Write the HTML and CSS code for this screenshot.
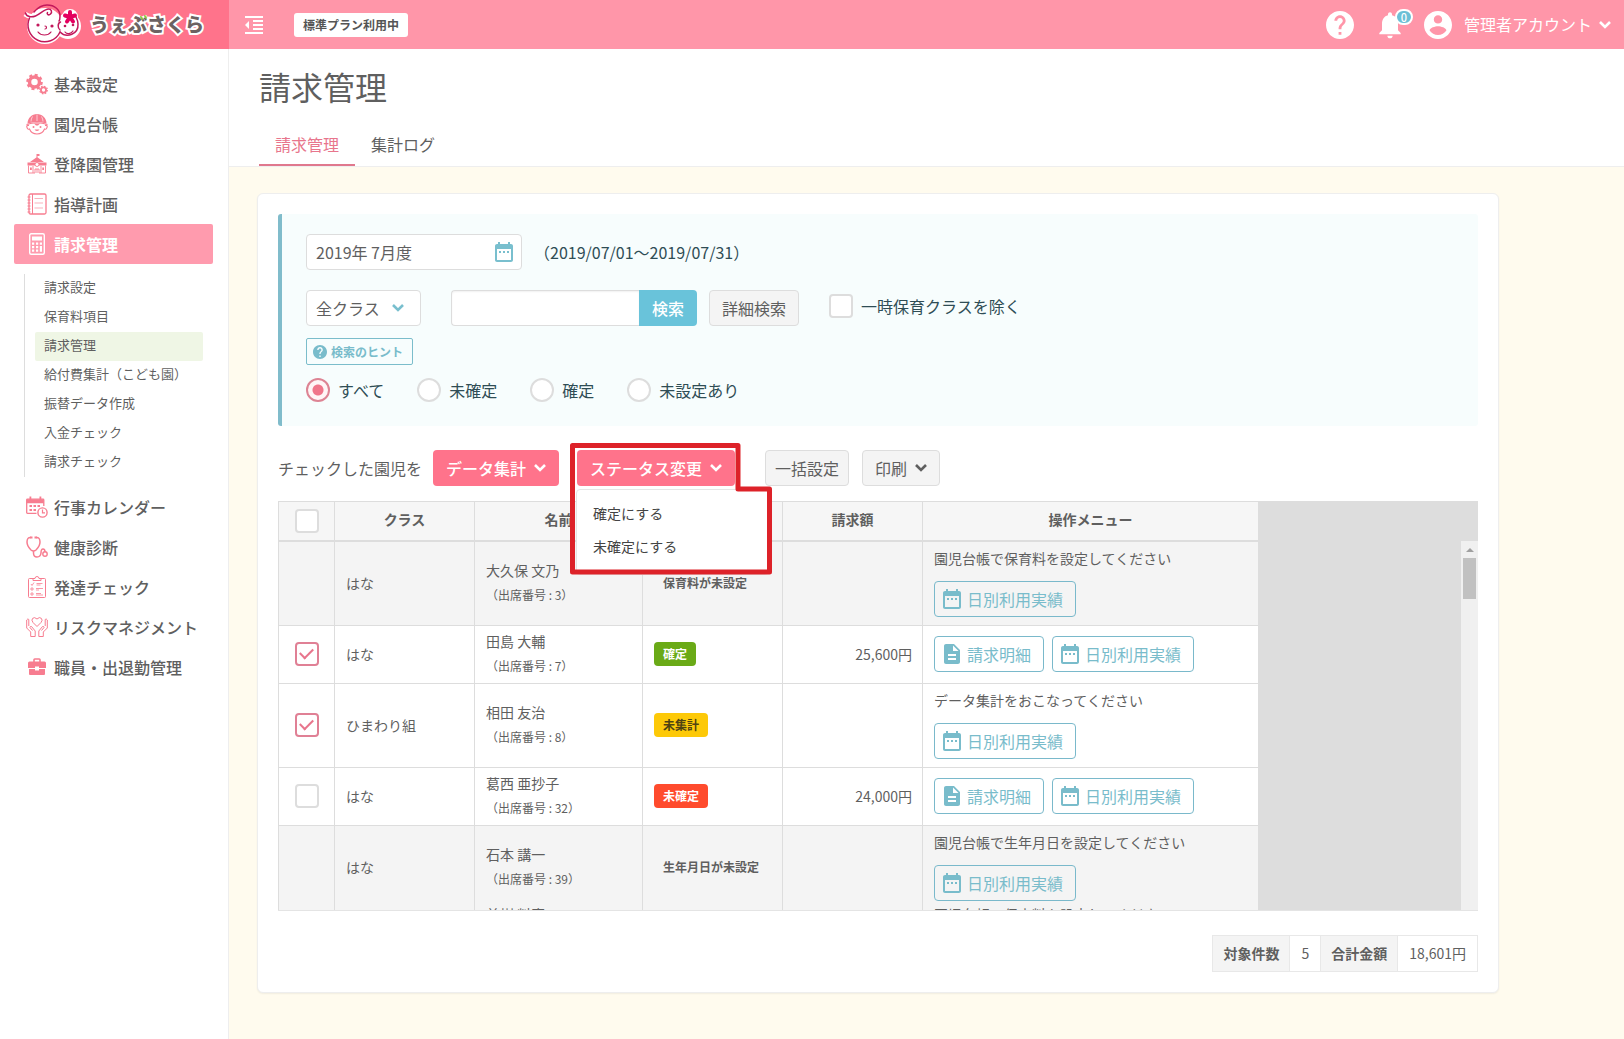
FILE: index.html
```html
<!DOCTYPE html>
<html lang="ja">
<head>
<meta charset="utf-8">
<meta name="viewport" content="width=device-width, initial-scale=1">
<title>請求管理 | うぇぶさくら</title>
<link rel="stylesheet" href="styles.css">
</head>
<body>
<svg class="sprite" aria-hidden="true">
  <symbol id="i-date" viewBox="0 0 24 24"><path d="M9 11H7v2h2v-2zm4 0h-2v2h2v-2zm4 0h-2v2h2v-2zm2-7h-1V2h-2v2H8V2H6v2H5c-1.11 0-1.99.9-1.99 2L3 20c0 1.1.89 2 2 2h14c1.1 0 2-.9 2-2V6c0-1.1-.9-2-2-2zm0 16H5V9h14v11z"/></symbol>
  <symbol id="i-doc" viewBox="0 0 24 24"><path d="M14 2H6c-1.1 0-1.99.9-1.99 2L4 20c0 1.1.89 2 1.99 2H18c1.1 0 2-.9 2-2V8l-6-6zm2 16H8v-2h8v2zm0-4H8v-2h8v2zm-3-5V3.5L18.5 9H13z"/></symbol>
  <symbol id="i-help" viewBox="2 2 20 20"><path d="M12 2C6.48 2 2 6.48 2 12s4.48 10 10 10 10-4.48 10-10S17.52 2 12 2zm1 17h-2v-2h2v2zm2.07-7.75l-.9.92C13.45 12.9 13 13.5 13 15h-2v-.5c0-1.1.45-2.1 1.17-2.83l1.24-1.26c.37-.36.59-.86.59-1.41 0-1.1-.9-2-2-2s-2 .9-2 2H8c0-2.21 1.79-4 4-4s4 1.79 4 4c0 .88-.36 1.68-.93 2.25z"/></symbol>
  <symbol id="i-chev" viewBox="0 0 12 12"><path d="M1 3l5 5 5-5" fill="none" stroke="currentColor" stroke-width="2.600"/></symbol>
</svg>

<header class="topbar">
  <a class="brand" href="#" aria-label="うぇぶさくら">
    <svg class="brand-mark" viewBox="0 0 60 44" aria-hidden="true">
      <g fill="#fff" stroke="#fff" stroke-width="3">
        <circle cx="23" cy="24" r="16.500"/><circle cx="46" cy="24" r="11.500"/><circle cx="48" cy="15" r="6.500"/><path d="M3 12q8 6 15-2" fill="none" stroke-width="5"/>
      </g>
      <g fill="none" stroke="#c2185b" stroke-width="1.500" stroke-linecap="round">
        <path d="M7.500 16A15.800 15.800 0 1 0 38 30"/>
        <path d="M3.500 11c1 4 6 4.500 10 3 5-2 9-7 13-7 3 0 4 3 2 5s-4 0-3-1.500M12 10Q18 3 25 3c8 0 13 5 13 11 0 4-1 5-1 5"/>
        <path d="M38 30a10.500 10.500 0 0 0 18-8c0-3-1-5-2-7M38.500 20c-3 1-3 6-.5 8"/>
        <path d="M16 30c3 4 10 4 13 0M43 30c2 2.500 6 2 8-1M23 24c2 0 2 3 0 3" stroke-width="1.200"/>
      </g>
      <g fill="#c2185b"><circle cx="16" cy="23" r="1.600"/><circle cx="30" cy="24" r="1.600"/><circle cx="43" cy="24" r="1.300"/><circle cx="51" cy="23" r="1.300"/></g>
      <path d="M48 15V10M48 15l5-1.500M48 15l3 4.500M48 15l-3 4.500M48 15l-5-1.500" stroke="#e4005f" stroke-width="4" stroke-linecap="round"/>
    </svg>
    <span class="brand-name">うぇぶさくら</span>
    <svg class="brand-leaf" viewBox="0 0 8 6" aria-hidden="true"><path d="M0 1q3 0 3 4-3-1-3-4zM4 0q3 0 3 4-3-1-3-4z" fill="#8cc63f"/></svg>
  </a>
  <div class="topbar-main">
    <button class="icon-btn" type="button" aria-label="メニューを閉じる"><svg class="ic18" viewBox="3 3 18 18"><path fill="currentColor" d="M11 17h10v-2H11v2zm-8-5l4 4V8l-4 4zm0 9h18v-2H3v2zM3 3v2h18V3H3zm8 6h10V7H11v2zm0 4h10v-2H11v2z"/></svg></button>
    <span class="plan">標準プラン利用中</span>
    <div class="user-area">
      <a class="icon-link" href="#" aria-label="ヘルプ"><svg class="ic28"><use href="#i-help"/></svg></a>
      <a class="icon-link bell" href="#" aria-label="お知らせ"><svg class="ic32" viewBox="0 0 24 24"><path d="M12 22c1.100 0 2-.9 2-2h-4c0 1.100.89 2 2 2zm6-6v-5c0-3.070-1.640-5.640-4.500-6.320V4c0-.83-.67-1.500-1.500-1.500s-1.500.67-1.500 1.500v.68C7.630 5.360 6 7.920 6 11v5l-2 2v1h16v-1l-2-2z"/></svg><span class="count">0</span></a>
      <a class="account" href="#"><svg class="ic28" viewBox="2 2 20 20" aria-hidden="true"><path d="M12 2C6.480 2 2 6.480 2 12s4.480 10 10 10 10-4.480 10-10S17.520 2 12 2zm0 3c1.660 0 3 1.340 3 3s-1.340 3-3 3-3-1.340-3-3 1.340-3 3-3zm0 14.200c-2.500 0-4.710-1.280-6-3.220.03-1.990 4-3.080 6-3.080 1.990 0 5.970 1.090 6 3.080-1.290 1.940-3.500 3.220-6 3.220z"/></svg><span class="account-name">管理者アカウント</span><svg class="ic12"><use href="#i-chev"/></svg></a>
    </div>
  </div>
</header>

<div class="shell">
  <nav class="sidebar" aria-label="メインメニュー">
    <a class="nav-item" href="#"><svg viewBox="0 0 22 22" aria-hidden="true"><circle cx="8.500" cy="9" r="5" fill="none" stroke="currentColor" stroke-width="3.500"/><circle cx="8.500" cy="9" r="7.200" fill="none" stroke="currentColor" stroke-width="2.200" stroke-dasharray="3 2.650"/><circle cx="17.500" cy="17" r="2.600" fill="none" stroke="currentColor" stroke-width="1.800"/><circle cx="17.500" cy="17" r="3.800" fill="none" stroke="currentColor" stroke-width="1.200" stroke-dasharray="1.600 1.380"/></svg>基本設定</a>
    <a class="nav-item" href="#"><svg viewBox="0 0 22 22" aria-hidden="true"><path d="M1.500 10.500C1.500 5 6 1 11 1s9.500 4 9.500 9.500q-9.500-3-19 0z" fill="currentColor"/><path d="M11 1.500v6.500M6.500 3.500Q5 6 5 8.500M15.500 3.500Q17 6 17 8.500" stroke="#fff" stroke-width=".6" fill="none"/><path d="M.5 11.500Q11 8 21.500 11.500M3 12.500Q0 12 1 14.500t2.500 1.500q2 5 7.500 5t7.500-5q1.500 1 2.500-1.500t-2-2" fill="none" stroke="currentColor" stroke-width="1.100"/><circle cx="7.500" cy="14" r="1" fill="currentColor"/><circle cx="14.500" cy="14" r="1" fill="currentColor"/><path d="M8 10.500h6l-2 2h-2zM8.500 16.500h5q-2.500 3-5 0z" fill="currentColor"/></svg>園児台帳</a>
    <a class="nav-item" href="#"><svg viewBox="0 0 22 22" aria-hidden="true"><path d="M4 9l7-5 7 5zM10.500 1h3v2h-2v2h-1zM1.500 9.500h19v3h-19z" fill="currentColor"/><path d="M2.500 12.500v7.500h4.500v-7M15 13v7h4.500v-7.500M7 20h2v-4h4v4h2M11 16v4" fill="none" stroke="currentColor" stroke-width=".9"/><path d="M4 14.500h1.800V17H4zM16.300 14.500H18V17h-1.700z" fill="currentColor"/><circle cx="11" cy="11.500" r="2" fill="#fff" stroke="currentColor" stroke-width=".9"/></svg>登降園管理</a>
    <a class="nav-item" href="#"><svg viewBox="0 0 22 22" aria-hidden="true"><rect x="3" y="1" width="17" height="20" rx="1.500" fill="none" stroke="currentColor" stroke-width="1.300"/><path d="M6.500 1v20M1.500 4h3M1.500 7h3M1.500 10h3M1.500 13h3M1.500 16h3M1.500 19h3" stroke="currentColor"/><path d="M8.500 5.500h8.500M8.500 10h8.500M8.500 15h8.500" stroke="currentColor" stroke-width=".6"/></svg>指導計画</a>
    <a class="nav-item is-active" href="#" aria-current="page"><svg viewBox="0 0 22 22" aria-hidden="true"><rect x="3.700" y=".7" width="14.600" height="20.600" rx="1.500" fill="none" stroke="currentColor" stroke-width="1.400"/><path d="M6 3.500h10v4H6zM6 9.500h2.200v2.200H6zM10 9.500h2.200v2.200H10zM13.800 9.500H16v2.200h-2.200zM6 13h2.200v2.200H6zM10 13h2.200v2.200H10zM6 16.500h2.200v2.200H6zM10 16.500h2.200v2.200H10zM13.800 13H16v5.700h-2.200z" fill="currentColor"/></svg>請求管理</a>
    <div class="subnav">
      <a href="#">請求設定</a>
      <a href="#">保育料項目</a>
      <a class="is-current" href="#">請求管理</a>
      <a href="#">給付費集計（こども園）</a>
      <a href="#">振替データ作成</a>
      <a href="#">入金チェック</a>
      <a href="#">請求チェック</a>
    </div>
    <a class="nav-item" href="#"><svg viewBox="0 0 22 22" aria-hidden="true"><path d="M10.500 17.300H1.500q-.8 0-.8-.8V4q0-.8.800-.8h15.500q.8 0 .8.800v6" fill="none" stroke="currentColor" stroke-width="1.300"/><path d="M.7 3.200h17.100v4H.7zM3.500.5h1.800v3H3.500zM13.500.5h1.800v3h-1.800zM3.500 9h2.500v2H3.500zM7.500 9H10v2H7.500zM11.500 9H14v2h-2.500zM3.500 13h2.500v2H3.500zM7.500 13H10v2H7.500z" fill="currentColor"/><circle cx="16.500" cy="16.500" r="4.600" fill="#fff" stroke="currentColor" stroke-width="1.400"/><path d="M16.500 13.500v3.300h2.500" fill="none" stroke="currentColor" stroke-width="1.200"/></svg>行事カレンダー</a>
    <a class="nav-item" href="#"><svg viewBox="0 0 22 22" aria-hidden="true"><path d="M5 1.500Q1 1 1 6q0 4 4 8 2.500 2 5 0 4-4 4-8 0-5-4-4.500M7.500 15v2q0 4 3.500 4t4-4q0-4 2-4t2 3" fill="none" stroke="currentColor" stroke-width="1.500"/><path d="M4 .5h2.500v2H4zM8.500.5H11v2H8.500z" fill="currentColor"/><circle cx="19" cy="18" r="2.200" fill="none" stroke="currentColor" stroke-width="1.400"/></svg>健康診断</a>
    <a class="nav-item" href="#"><svg viewBox="0 0 22 22" aria-hidden="true"><path d="M8 2.500H3.500q-1 0-1 1v17q0 1 1 1h15q1 0 1-1v-17q0-1-1-1H14M7 4.500V2.500h2q0-2 2-2t2 2h2v2z" fill="none" stroke="currentColor"/><path d="M5 8l1 1.500L8 6.500M5 12h2v2H5zM5 17h2v2H5zM10.500 7.500h6M10.500 9h4M10 12.500h7M10 14h3M10 17.500h5M10 19h7" fill="none" stroke="currentColor" stroke-width=".8"/></svg>発達チェック</a>
    <a class="nav-item" href="#"><svg viewBox="0 0 22 22" aria-hidden="true"><path d="M11 10.500L7 6.500Q5 4 6.700 2.300T11 3q2.500-2.500 4.300-.7T15 6.500zM.7 4v8l4 4v4.500h4.500V15L5.500 10.500q-1.500-.5-1.500 1l2.500 3M2.800 10V3.500Q2 2 .7 4M21.300 4v8l-4 4v4.500h-4.500V15l3.700-4.500q1.500-.5 1.500 1l-2.500 3M19.200 10V3.500q.8-1.500 2.100.5" fill="none" stroke="currentColor"/></svg>リスクマネジメント</a>
    <a class="nav-item" href="#"><svg viewBox="0 0 22 22" aria-hidden="true"><path d="M8 6V3.800q0-.8.800-.8h4.400q.8 0 .8.800V6" fill="none" stroke="currentColor" stroke-width="1.600"/><path d="M3.500 5.500h15q1.500 0 1.500 1.500v5h-7v-1.500H9V12H2V7q0-1.500 1.500-1.500zM3 13h6v1.500h4V13h6v5q0 1-1 1H4q-1 0-1-1z" fill="currentColor"/></svg>職員・出退勤管理</a>
  </nav>

  <main class="main">
    <div class="page-head">
      <h1>請求管理</h1>
      <div class="tabs">
        <a class="tab is-active" href="#">請求管理</a>
        <a class="tab" href="#">集計ログ</a>
      </div>
    </div>

    <div class="content">
      <section class="card">
        <form class="filter">
          <div class="filter-row">
            <div class="field date-field">
              <input type="text" value="2019年 7月度" aria-label="対象年月">
              <svg class="ic24"><use href="#i-date"/></svg>
            </div>
            <span class="period">（2019/07/01～2019/07/31）</span>
          </div>
          <div class="filter-row">
            <div class="field class-field">
              <select aria-label="クラス"><option>全クラス</option></select>
              <svg class="ic12"><use href="#i-chev"/></svg>
            </div>
            <div class="search">
              <input type="text" aria-label="検索キーワード">
              <button type="button">検索</button>
            </div>
            <button class="btn btn-detail" type="button">詳細検索</button>
            <label class="check-label"><input class="check" type="checkbox">一時保育クラスを除く</label>
          </div>
          <button class="hint" type="button"><svg class="ic14"><use href="#i-help"/></svg>検索のヒント</button>
          <div class="radios">
            <label><input type="radio" name="status" checked>すべて</label>
            <label><input type="radio" name="status">未確定</label>
            <label><input type="radio" name="status">確定</label>
            <label><input type="radio" name="status">未設定あり</label>
          </div>
        </form>

        <div class="actions">
          <span class="actions-label">チェックした園児を</span>
          <button class="btn btn-pink" type="button">データ集計<svg class="ic12"><use href="#i-chev"/></svg></button>
          <div class="dropdown">
            <button class="btn btn-pink" type="button" aria-expanded="true">ステータス変更<svg class="ic12"><use href="#i-chev"/></svg></button>
            <div class="menu">
              <a href="#">確定にする</a>
              <a href="#">未確定にする</a>
            </div>
            <svg class="highlight" viewBox="0 0 202 132" aria-hidden="true"><path d="M2.500 2.500h165.500v43.500h31.500v83H2.500z" fill="none" stroke="#dd2229" stroke-width="5" stroke-linejoin="round"/></svg>
          </div>
          <button class="btn btn-bulk" type="button">一括設定</button>
          <button class="btn btn-menu" type="button">印刷<svg class="ic12"><use href="#i-chev"/></svg></button>
        </div>

        <div class="grid-box">
          <table class="grid">
            <colgroup><col class="c-check"><col class="c-class"><col class="c-name"><col class="c-state"><col class="c-amount"><col class="c-ops"></colgroup>
            <thead>
              <tr><th class="center"><input class="check" type="checkbox" aria-label="すべて選択"></th><th>クラス</th><th>名前</th><th>ステータス</th><th>請求額</th><th>操作メニュー</th></tr>
            </thead>
            <tbody>
              <tr class="tall muted">
                <td></td><td>はな</td>
                <td><span class="name">大久保 文乃</span><span class="no">（出席番号 : 3）</span></td>
                <td><span class="badge">保育料が未設定</span></td><td class="num"></td>
                <td><p class="note">園児台帳で保育料を設定してください</p><div class="ops"><a class="op" href="#"><svg class="ic24"><use href="#i-date"/></svg>日別利用実績</a></div></td>
              </tr>
              <tr class="short">
                <td class="center"><input class="check" type="checkbox" checked aria-label="田島 大輔を選択"></td><td>はな</td>
                <td><span class="name">田島 大輔</span><span class="no">（出席番号 : 7）</span></td>
                <td><span class="badge is-fixed">確定</span></td><td class="num">25,600円</td>
                <td><div class="ops"><a class="op" href="#"><svg class="ic24"><use href="#i-doc"/></svg>請求明細</a><a class="op" href="#"><svg class="ic24"><use href="#i-date"/></svg>日別利用実績</a></div></td>
              </tr>
              <tr class="tall">
                <td class="center"><input class="check" type="checkbox" checked aria-label="相田 友治を選択"></td><td>ひまわり組</td>
                <td><span class="name">相田 友治</span><span class="no">（出席番号 : 8）</span></td>
                <td><span class="badge is-pending">未集計</span></td><td class="num"></td>
                <td><p class="note">データ集計をおこなってください</p><div class="ops"><a class="op" href="#"><svg class="ic24"><use href="#i-date"/></svg>日別利用実績</a></div></td>
              </tr>
              <tr class="short">
                <td class="center"><input class="check" type="checkbox" aria-label="葛西 亜抄子を選択"></td><td>はな</td>
                <td><span class="name">葛西 亜抄子</span><span class="no">（出席番号 : 32）</span></td>
                <td><span class="badge is-open">未確定</span></td><td class="num">24,000円</td>
                <td><div class="ops"><a class="op" href="#"><svg class="ic24"><use href="#i-doc"/></svg>請求明細</a><a class="op" href="#"><svg class="ic24"><use href="#i-date"/></svg>日別利用実績</a></div></td>
              </tr>
              <tr class="muted joined">
                <td></td><td>はな</td>
                <td><span class="name">石本 講一</span><span class="no">（出席番号 : 39）</span></td>
                <td><span class="badge">生年月日が未設定</span></td><td class="num"></td>
                <td><p class="note">園児台帳で生年月日を設定してください</p><div class="ops"><a class="op" href="#"><svg class="ic24"><use href="#i-date"/></svg>日別利用実績</a></div></td>
              </tr>
              <tr class="muted next">
                <td></td><td></td><td><span class="name">美樹 料恵</span></td><td></td><td></td>
                <td><p class="note">園児台帳で保育料を設定してください</p></td>
              </tr>
            </tbody>
          </table>
          <div class="scrollbar" aria-hidden="true"><span class="arrow"></span><span class="thumb"></span></div>
        </div>

        <table class="summary">
          <tr><th scope="row">対象件数</th><td>5</td><th scope="row">合計金額</th><td>18,601円</td></tr>
        </table>
      </section>
    </div>
  </main>
</div>
</body>
</html>
```

FILE: styles.css
```css
* { box-sizing: border-box; }

body {
  margin: 0;
  min-height: 100vh;
  display: flex;
  flex-direction: column;
  background: #fffbee;
  color: #5f5f5f;
  font: 14px/20px "Noto Sans CJK JP", "Noto Sans", sans-serif;
}

a { color: inherit; text-decoration: none; }
button, input, select { font: inherit; color: inherit; margin: 0; }
button { cursor: pointer; }
svg { fill: currentColor; flex: none; }

.sprite { display: none; }
.ic12 { width: 12px; height: 12px; }
.ic14 { width: 14px; height: 14px; }
.ic18 { width: 18px; height: 18px; display: block; }
.ic24 { width: 24px; height: 24px; }
.ic28 { width: 28px; height: 28px; }
.ic32 { width: 32px; height: 32px; }

/* top bar */
.topbar { display: flex; height: 49px; color: #fff; }

.brand {
  position: relative;
  flex: none;
  display: flex;
  align-items: center;
  gap: 8px;
  width: 229px;
  padding: 0 0 2px 22px;
  background: #ff738b;
}
.brand-mark { width: 60px; height: 44px; }
.brand-name {
  font-size: 19px;
  line-height: 28px;
  font-weight: 900;
  color: #6d6262;
  -webkit-text-stroke: 4px #fff;
  paint-order: stroke fill;
}
.brand-leaf { position: absolute; left: 140px; top: 15px; width: 8px; height: 6px; }

.topbar-main {
  flex: 1;
  display: flex;
  align-items: center;
  padding: 0 13px 0 16px;
  background: #ff96a9;
}
.icon-btn { padding: 0; border: 0; background: none; color: #fff; }
.plan {
  margin-left: 31px;
  padding: 0 9px;
  border-radius: 3px;
  background: #fff;
  color: #555;
  font-size: 12px;
  line-height: 24px;
  font-weight: 700;
}
.user-area { display: flex; align-items: center; margin-left: auto; }
.icon-link { position: relative; display: flex; }
.bell { margin: 0 18px 0 20px; }
.count {
  position: absolute;
  left: 21px;
  top: 0;
  width: 18px;
  height: 16px;
  border: 2px solid #fff;
  border-radius: 8px;
  background: #6cc0d6;
  font-size: 11px;
  line-height: 12px;
  font-weight: 500;
  text-align: center;
}
.account { display: flex; align-items: center; font-size: 16px; }
.account-name { margin: 0 7px 0 12px; padding-bottom: 2px; }

/* sidebar */
.shell { flex: 1; display: flex; }
.sidebar {
  flex: none;
  width: 229px;
  padding: 15px 15px 15px 14px;
  border-right: 1px solid #eee;
  background: #fff;
}
.nav-item {
  display: flex;
  align-items: center;
  gap: 6px;
  height: 40px;
  padding-left: 12px;
  border-radius: 2px;
  font-size: 16px;
  font-weight: 500;
}
.nav-item svg { width: 22px; height: 22px; color: #f77d90; fill: none; }
.nav-item.is-active { background: #ff9bae; color: #fff; font-weight: 700; }
.nav-item.is-active svg { color: #fff; }
.subnav {
  margin: 10px;
  padding-left: 10px;
  border-left: 1px solid #ddd;
}
.subnav a {
  display: block;
  padding: 0 0 3px 9px;
  border-radius: 2px;
  font-size: 13px;
  line-height: 26px;
}
.subnav .is-current { background: #eff6e5; }

/* page head */
.main { flex: 1; min-width: 0; }
.page-head { padding: 13px 30px 0; border-bottom: 1px solid #eee; background: #fff; }
h1 { margin: 0; font-size: 32px; line-height: 48px; font-weight: 400; }
.tabs { display: flex; margin-top: 14px; }
.tab {
  padding: 8px 16px;
  border-bottom: 2px solid transparent;
  font-size: 16px;
  line-height: 24px;
}
.tab.is-active { border-color: #e0788d; color: #e8758c; }

/* card */
.content { padding: 26px 28px; }
.card {
  max-width: 1242px;
  padding: 20px;
  border: 1px solid #eee;
  border-radius: 6px;
  background: #fff;
  box-shadow: 0 1px 2px rgba(0, 0, 0, .06);
}

/* filter panel */
.filter {
  padding: 20px 24px 24px;
  border-left: 4px solid #80bccb;
  border-radius: 3px;
  background: #f7fdfd;
  color: #2f4d55;
  font-size: 16px;
}
.filter-row { display: flex; align-items: center; margin-bottom: 20px; }
.field { position: relative; color: #5f5f5f; }
.field input, .field select {
  display: block;
  width: 100%;
  height: 36px;
  padding: 0 9px;
  border: 1px solid #ddd;
  border-radius: 4px;
  background: #fff;
  appearance: none;
}
.field svg { position: absolute; pointer-events: none; color: #79bfce; }
.date-field { width: 216px; }
.date-field svg { right: 6px; top: 6px; }
.class-field { width: 115px; }
.class-field svg { right: 17px; top: 12px; }
.period { margin-left: 12px; }
.search { display: flex; width: 246px; margin: 0 12px 0 30px; }
.search input {
  flex: 1;
  min-width: 0;
  height: 36px;
  border: 1px solid #ddd;
  border-right: 0;
  border-radius: 4px 0 0 4px;
  background: #fff;
  box-shadow: inset 0 1px 2px rgba(0, 0, 0, .06);
}
.search button {
  width: 58px;
  padding: 0;
  border: 0;
  border-radius: 0 4px 4px 0;
  background: #69c3da;
  color: #fff;
  font-weight: 500;
}
.check-label {
  display: flex;
  align-items: center;
  gap: 8px;
  margin-left: 30px;
  padding-bottom: 5px;
}

.filter-row + .hint { margin-top: -8px; }
.hint {
  display: flex;
  align-items: center;
  gap: 4px;
  height: 27px;
  padding: 0 9px 0 6px;
  border: 1px solid #7bbdcb;
  border-radius: 2px;
  background: #f7fdfd;
  color: #79bccb;
  font-size: 12px;
  font-weight: 700;
}
.radios { display: flex; gap: 33px; margin-top: 13px; }
.radios label { display: flex; align-items: center; gap: 8px; }

input[type="radio"] {
  appearance: none;
  width: 24px;
  height: 24px;
  border: 2px solid #ddd;
  border-radius: 50%;
  background: #fff;
}
input[type="radio"]:checked {
  border-color: #dd8494;
  background: radial-gradient(circle, #f0758a 5px, #fff5f6 6px);
}
.check {
  appearance: none;
  display: grid;
  place-content: center;
  width: 24px;
  height: 24px;
  border: 2px solid #ddd;
  border-radius: 4px;
  background: #fff;
}
.check:checked { border-color: #e08095; }
.check:checked::after {
  content: "";
  width: 11px;
  height: 6px;
  margin-bottom: 3px;
  border: solid #e8758c;
  border-width: 0 0 2px 2px;
  transform: rotate(-45deg);
}

/* buttons */
.btn {
  display: flex;
  align-items: center;
  justify-content: center;
  gap: 8px;
  height: 36px;
  padding: 0 12px;
  border: 1px solid #ddd;
  border-radius: 4px;
  background: #f4f4f4;
  color: #5f5f5f;
  font-size: 16px;
  white-space: nowrap;
}
.btn-pink {
  padding: 0 13px;
  border: 0;
  background: #ff738b;
  color: #fff;
  font-weight: 500;
}
.btn-bulk { margin-left: 30px; padding: 0 9px; }
.btn-menu { margin-left: 13px; }

.actions { display: flex; align-items: center; margin: 24px 0 15px; }
.actions-label { margin-right: 11px; font-size: 16px; }
.dropdown { position: relative; margin-left: 18px; }
.menu {
  position: absolute;
  z-index: 2;
  top: 39px;
  left: -1px;
  width: 193px;
  padding: 7px 0 11px;
  border: 1px solid #e5e5e5;
  border-radius: 4px;
  background: #fff;
}
.menu a { display: block; padding-left: 16px; line-height: 33px; color: #444; }
.highlight {
  position: absolute;
  z-index: 3;
  left: -7px;
  top: -7px;
  width: 202px;
  height: 132px;
  pointer-events: none;
}

/* billing table */
.grid-box {
  display: flex;
  justify-content: space-between;
  height: 410px;
  overflow: hidden;
  border-bottom: 1px solid #e4e4e4;
  background: #ddd;
}
.grid {
  flex: none;
  align-self: flex-start;
  width: 981px;
  table-layout: fixed;
  border-collapse: separate;
  border-spacing: 0;
  border: solid #ddd;
  border-width: 1px 0 0 1px;
  background: #fff;
}
.c-check { width: 56px; }
.c-class, .c-state, .c-amount { width: 140px; }
.c-name { width: 168px; }
.c-ops { width: 336px; }
.grid th, .grid td { border: solid #ddd; border-width: 0 1px 1px 0; }
.grid th {
  height: 40px;
  padding: 0 0 4px;
  border-bottom-width: 2px;
  background: #f6f6f6;
  font-weight: 700;
}
.grid th.center { padding: 0; }
.grid td { padding: 0 11px 2px; }
.center .check { margin: 0 auto; }
.grid .tall td { height: 84px; }
.grid .short td { height: 58px; }
.muted { background: #f4f4f4; }
.name { display: block; line-height: 24px; }
.no { display: block; margin-top: 1px; font-size: 12px; line-height: 24px; }
.grid .num { padding-right: 10px; text-align: right; }
.note { margin: 0 0 13px; }

.badge {
  display: inline-block;
  padding: 0 9px;
  border-radius: 4px;
  font-size: 12px;
  line-height: 24px;
  font-weight: 700;
  white-space: nowrap;
}
.is-fixed { background: #6aaa17; color: #fff; }
.is-pending { background: #fdc908; color: #4f4212; }
.is-open { background: #ff4b2d; color: #fff; }

.ops { display: flex; gap: 8px; }
.op {
  display: flex;
  align-items: center;
  gap: 3px;
  height: 36px;
  padding: 0 12px 0 5px;
  border: 1px solid #7ab9cb;
  border-radius: 4px;
  color: #79bccb;
  font-size: 16px;
}

/* rows at the fold of the scroll area run into each other */
.grid .joined td { height: 77px; padding-top: 6px; border-bottom: 0; }
.grid .next td { height: 84px; padding-top: 1px; vertical-align: top; }
.next .name, .next .note { line-height: 20px; }

.scrollbar {
  display: flex;
  flex-direction: column;
  align-items: center;
  width: 17px;
  margin-top: 40px;
  background: #f0f0f0;
}
.arrow {
  margin: 7px 0 6px;
  border: 4px solid transparent;
  border-top: 0;
  border-bottom-color: #a0a0a0;
}
.thumb { width: 13px; height: 41px; background: #c1c1c1; }

/* totals */
.summary { margin: 24px 0 0 auto; border-collapse: collapse; }
.summary th, .summary td { height: 36px; padding: 0 11px 2px; border: 1px solid #e8e8e8; }
.summary th { padding: 0 10px 2px; background: #f4f4f4; font-weight: 700; }
```
